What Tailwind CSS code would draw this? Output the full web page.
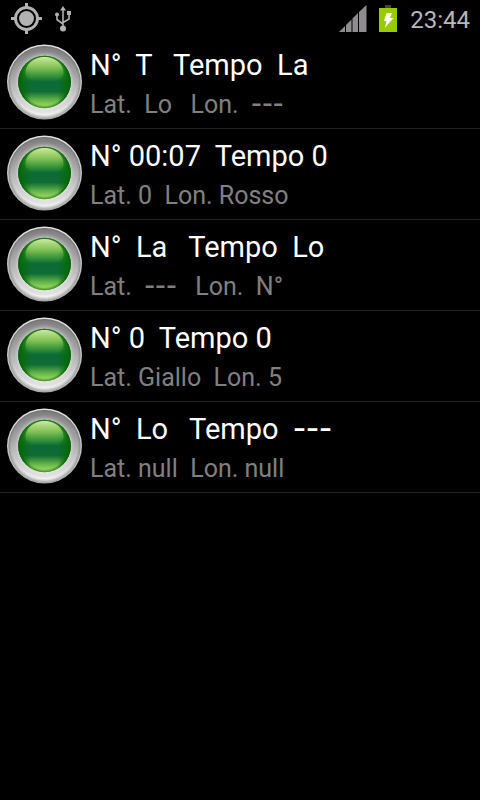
<!DOCTYPE html>
<html lang="it">

<head>
    <meta charset="UTF-8">
    <meta name="viewport" content="width=device-width, initial-scale=1.0">
    <title>Tempo</title>
    <script src="https://cdn.jsdelivr.net/npm/@tailwindcss/browser@4"></script>
</head>

<body class="min-h-screen bg-black text-white font-['Roboto',sans-serif]">

    <!-- Shared LED drawing -->
    <svg class="absolute size-0" aria-hidden="true">
        <defs>
            <linearGradient id="ring" x1="0" y1="0" x2="0" y2="1">
                <stop offset="0" stop-color="#7c7a7c" />
                <stop offset="0.4" stop-color="#a5a3a5" />
                <stop offset="0.75" stop-color="#d6d6d6" />
                <stop offset="1" stop-color="#f8f8f8" />
            </linearGradient>
            <linearGradient id="edge" x1="0" y1="0" x2="0" y2="1">
                <stop offset="0" stop-color="#e2e2e2" />
                <stop offset="1" stop-color="#a8a8a8" />
            </linearGradient>
            <radialGradient id="bevel">
                <stop offset="0.74" stop-color="#e8e8e8" stop-opacity="0.5" />
                <stop offset="0.9" stop-color="#999" stop-opacity="0" />
                <stop offset="1" stop-color="#555" stop-opacity="0.5" />
            </radialGradient>
            <linearGradient id="glass" x1="0" y1="0" x2="0" y2="1">
                <stop offset="0" stop-color="#3c9422" />
                <stop offset="0.25" stop-color="#4da53c" />
                <stop offset="0.43" stop-color="#1d7f33" />
                <stop offset="0.5" stop-color="#0c6a38" />
                <stop offset="0.68" stop-color="#0f6c34" />
                <stop offset="0.84" stop-color="#62b348" />
                <stop offset="1" stop-color="#b0e468" />
            </linearGradient>
            <linearGradient id="shine" x1="0" y1="0" x2="0" y2="1">
                <stop offset="0" stop-color="#cdeaa2" />
                <stop offset="0.4" stop-color="#96cc62" stop-opacity="0.85" />
                <stop offset="1" stop-color="#3f9a40" stop-opacity="0" />
            </linearGradient>
            <radialGradient id="rim">
                <stop offset="0.88" stop-color="#056005" stop-opacity="0" />
                <stop offset="1" stop-color="#075a07" stop-opacity="0.7" />
            </radialGradient>
            <linearGradient id="sides" x1="0" y1="0" x2="1" y2="0">
                <stop offset="0" stop-color="#056a08" />
                <stop offset="0.08" stop-color="#056a08" stop-opacity="0.8" />
                <stop offset="0.25" stop-color="#056a08" stop-opacity="0" />
                <stop offset="0.75" stop-color="#056a08" stop-opacity="0" />
                <stop offset="0.92" stop-color="#056a08" stop-opacity="0.8" />
                <stop offset="1" stop-color="#056a08" />
            </linearGradient>
        </defs>
        <symbol id="led" viewBox="0 0 76 76">
            <circle cx="38.5" cy="38" r="37.5" fill="url(#edge)" />
            <circle cx="38.5" cy="38" r="36" fill="url(#ring)" />
            <circle cx="38.5" cy="38" r="36" fill="url(#bevel)" />
            <circle cx="38.5" cy="38" r="26.3" fill="url(#glass)" />
            <circle cx="38.5" cy="38" r="26.3" fill="url(#sides)" />
            <circle cx="38.5" cy="38" r="26.3" fill="url(#rim)" />
            <path d="M19.500 30C19 20 28 13 38.500 13S58 20 57.500 30C57 36 50 37 38.500 37S20 36 19.500 30z" fill="url(#shine)" />
        </symbol>
    </svg>

    <!-- Status bar -->
    <header class="flex h-[38px] items-center justify-between px-[10px]">
        <div class="flex items-center gap-3">
            <svg class="size-8" viewBox="0 0 32 32" fill="none" stroke="#b2b2b2" role="img" aria-label="GPS">
                <circle cx="16.5" cy="15.5" r="11" stroke-width="3" />
                <circle cx="16.5" cy="15.5" r="7.5" fill="#b2b2b2" stroke="none" />
                <path d="M16.5 0v4M16.5 27v4M1 15.5h4M28 15.5h4" stroke-width="3" />
            </svg>
            <svg class="h-7 w-5" viewBox="0 0 20 28" fill="none" stroke="#b2b2b2" stroke-width="1.6" role="img" aria-label="USB">
                <path d="M9 4v18M3 10v4.500L9 19M15 9v5L9 17.500" />
                <path d="M9 1l3 4.500H6z" fill="#b2b2b2" stroke="none" />
                <circle cx="9" cy="23.500" r="3" fill="#b2b2b2" stroke="none" />
                <circle cx="3" cy="9.500" r="2" fill="#b2b2b2" stroke="none" />
                <path d="M13 6h4v4h-4z" fill="#b2b2b2" stroke="none" />
            </svg>
        </div>
        <div class="flex items-center gap-3">
            <svg class="size-7" viewBox="0 0 28 28" fill="#8e8c8f" role="img" aria-label="Signal">
                <path d="M0 27L6 21V27z" />
                <path d="M7 27V20L12.500 14.500V27z" />
                <path d="M13.500 27V13.500L19 8V27z" />
                <path d="M20 27V7L27.500 0V27z" />
            </svg>
            <svg class="h-7 w-[19px]" viewBox="0 0 19 28" role="img" aria-label="Battery charging">
                <path d="M6 0h6v3H6z" fill="#444" />
                <path d="M0 3h18v24H0z" fill="#99cc00" />
                <path d="M7.500 8h5.500l-2 5h3.500L6 22.500l1.500-6.500H5z" fill="#fff" />
            </svg>
            <time class="pt-px text-2xl text-[#b8b8b8]">23:44</time>
        </div>
    </header>

    <!-- List -->
    <main>
        <ul>
            <li class="flex items-center gap-2 border-b border-[#222] px-[6px] pt-[6px] pb-2">
                <svg class="size-[76px] shrink-0" aria-hidden="true"><use href="#led" /></svg>
                <div>
                    <h2 class="whitespace-pre text-[29px] leading-[42px]">N°  T   Tempo  La</h2>
                    <p class="whitespace-pre pt-1 text-[25px] leading-[30px] text-[#808080]">Lat.  Lo   Lon.  <span class="font-['DejaVu_Sans',sans-serif] text-[30px] leading-[0px]">---</span></p>
                </div>
            </li>
            <li class="flex items-center gap-2 border-b border-[#222] px-[6px] pt-[6px] pb-2">
                <svg class="size-[76px] shrink-0" aria-hidden="true"><use href="#led" /></svg>
                <div>
                    <h2 class="whitespace-pre text-[29px] leading-[42px]">N° 00:07  Tempo 0</h2>
                    <p class="whitespace-pre pt-1 text-[25px] leading-[30px] text-[#808080]">Lat. 0  Lon. Rosso</p>
                </div>
            </li>
            <li class="flex items-center gap-2 border-b border-[#222] px-[6px] pt-[6px] pb-2">
                <svg class="size-[76px] shrink-0" aria-hidden="true"><use href="#led" /></svg>
                <div>
                    <h2 class="whitespace-pre text-[29px] leading-[42px]">N°  La   Tempo  Lo</h2>
                    <p class="whitespace-pre pt-1 text-[25px] leading-[30px] text-[#808080]">Lat.  <span class="font-['DejaVu_Sans',sans-serif] text-[30px] leading-[0px]">---</span>   Lon.  N°</p>
                </div>
            </li>
            <li class="flex items-center gap-2 border-b border-[#222] px-[6px] pt-[6px] pb-2">
                <svg class="size-[76px] shrink-0" aria-hidden="true"><use href="#led" /></svg>
                <div>
                    <h2 class="whitespace-pre text-[29px] leading-[42px]">N° 0  Tempo 0</h2>
                    <p class="whitespace-pre pt-1 text-[25px] leading-[30px] text-[#808080]">Lat. Giallo  Lon. 5</p>
                </div>
            </li>
            <li class="flex items-center gap-2 border-b border-[#222] px-[6px] pt-[6px] pb-2">
                <svg class="size-[76px] shrink-0" aria-hidden="true"><use href="#led" /></svg>
                <div>
                    <h2 class="whitespace-pre text-[29px] leading-[42px]">N°  Lo   Tempo  <span class="font-['DejaVu_Sans',sans-serif] text-[36px] leading-[0px]">---</span></h2>
                    <p class="whitespace-pre pt-1 text-[25px] leading-[30px] text-[#808080]">Lat. null  Lon. null</p>
                </div>
            </li>
        </ul>
    </main>

</body>

</html>
